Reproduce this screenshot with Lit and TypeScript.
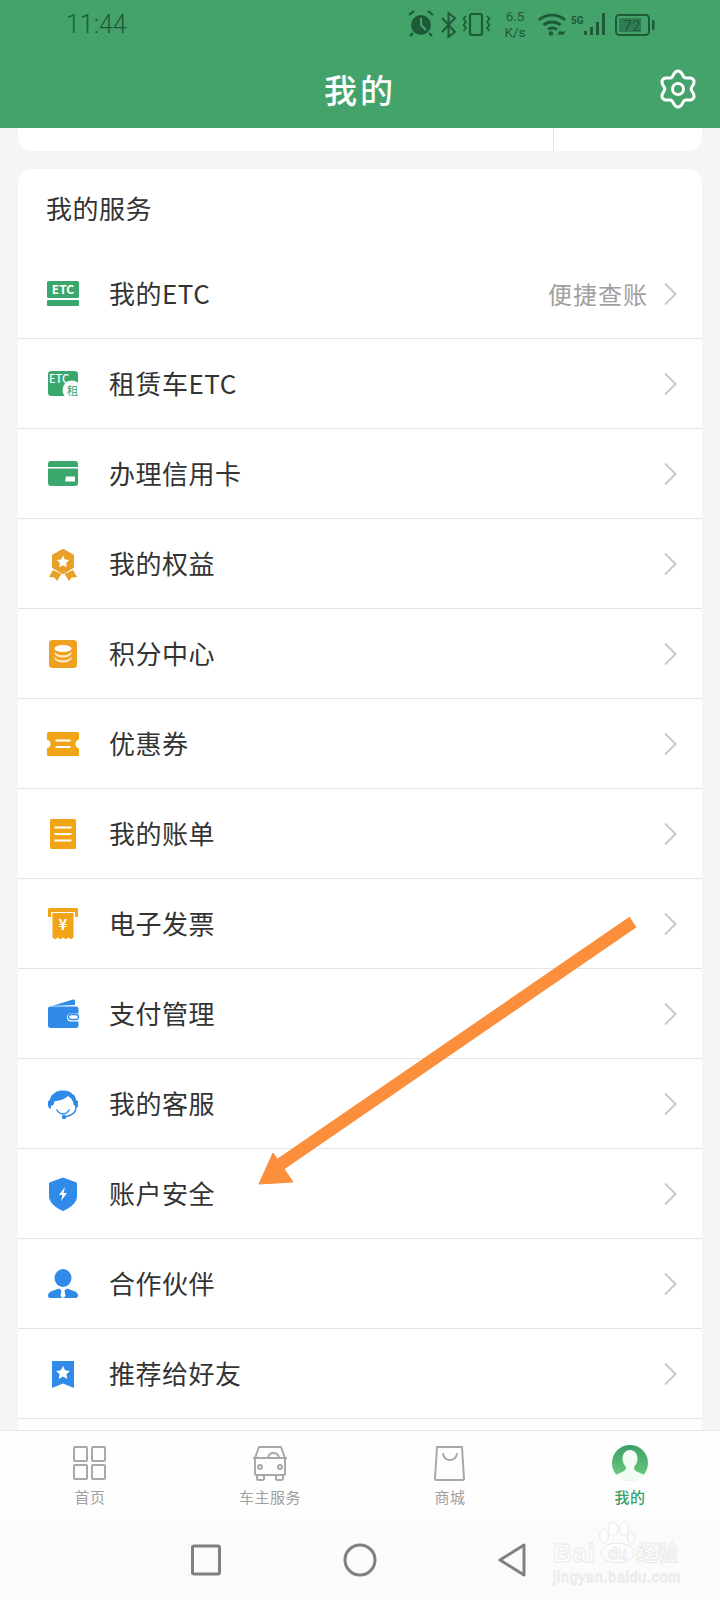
import { LitElement, html, css, svg } from 'lit';
import { customElement } from 'lit/decorators.js';

const GREEN = '#3aa76d';
const AMBER = '#f0a416';
const BLUE = '#2f8ae8';

// six soft lobes, same as the gear in the header
const gearPoints = () => {
  const pts: string[] = [];
  for (let i = 0; i < 120; i++) {
    const a = (i / 120) * Math.PI * 2;
    const r = 15.6 + 2.4 * Math.cos(6 * a);
    pts.push(`${(20 + r * Math.sin(a)).toFixed(2)},${(20 - r * Math.cos(a)).toFixed(2)}`);
  }
  return pts.join(' ');
};

const rowIcons = {
  etc: svg`<rect x="4" y="7" width="32" height="17" rx="1.5" fill="${GREEN}"/>
    <rect x="4" y="26" width="32" height="6" rx="1" fill="${GREEN}"/>
    <text x="20" y="20" text-anchor="middle" class="ico-txt" font-size="12" font-weight="700" fill="#fff">ETC</text>`,
  lease: svg`<rect x="5" y="7" width="30" height="25" rx="3.5" fill="${GREEN}"/>
    <text x="6" y="19" class="ico-txt" font-size="11" font-weight="500" fill="#fff">ETC</text>
    <circle cx="29" cy="26" r="9.5" fill="#fff"/>
    <text x="29.5" y="31" text-anchor="middle" class="ico-txt" font-size="11.5" fill="${GREEN}">租</text>`,
  card: svg`<path d="M8 7h24a3 3 0 0 1 3 3v3H5v-3a3 3 0 0 1 3-3zM5 14.500h30V29a3 3 0 0 1-3 3H8a3 3 0 0 1-3-3z" fill="${GREEN}"/>
    <path d="M23 22.500h9v5h-10z" fill="#fff"/>`,
  medal: svg`<path d="M10 26l-4 7 5.500.6 2.500 3.400 4.500-7zM30 26l4 7-5.500.6-2.500 3.400-4.500-7z" fill="#e8a027"/>
    <path d="M20 7l9 5v10.500l-9 5.500-9-5.500V12z" fill="#e8a027" stroke="#e8a027" stroke-width="4" stroke-linejoin="round"/>
    <path d="M20 11.500l1.900 3.900 4.300.6-3.100 3 .7 4.300-3.800-2-3.800 2 .7-4.300-3.100-3 4.300-.6z" fill="#fff"/>`,
  coins: svg`<rect x="6" y="6" width="28" height="28" rx="3.500" fill="#eda11f"/>
    <ellipse cx="20" cy="14.500" rx="8.500" ry="3.600" fill="#fff"/>
    <path d="M11.500 17.500c1 2.400 4.500 3.800 8.500 3.800s7.500-1.400 8.500-3.800v2.200c-1 2.400-4.500 3.800-8.500 3.800s-7.500-1.400-8.500-3.800zM11.500 22.500c1 2.400 4.500 3.800 8.500 3.800s7.500-1.400 8.500-3.800v2.200c-1 2.400-4.500 3.800-8.500 3.800s-7.500-1.400-8.500-3.800z" fill="#fde9c4"/>`,
  coupon: svg`<path d="M5 9a1.500 1.500 0 0 1 1.500-1.500h29A1.500 1.500 0 0 1 37 9v6c-2.400.8-3.600 2.500-3.600 4.500s1.200 3.700 3.600 4.500v6a1.500 1.500 0 0 1-1.500 1.500h-29A1.500 1.500 0 0 1 5 30v-6c2.400-.8 3.600-2.500 3.600-4.500S7.400 15.800 5 15z" transform="translate(-1 .500)" fill="${AMBER}"/>
    <path d="M12.500 16.500h15M12.500 23h15" stroke="#fff" stroke-width="2"/>`,
  bill: svg`<rect x="7" y="5" width="26" height="30" rx="1.500" fill="${AMBER}"/>
    <path d="M11.500 13.500h17M11.500 20h17M11.500 26.500h17" stroke="#fff" stroke-width="2"/>`,
  invoice: svg`<path d="M5 5.500a1.500 1.500 0 0 1 1.500-1.500h27A1.500 1.500 0 0 1 35 5.500V13h-3V8H8v5H5z" fill="${AMBER}"/>
    <path d="M9.500 9h21v24.500l-2.600 1.800-2.600-1.800-2.600 1.800-2.700-1.800-2.700 1.800-2.600-1.800-2.600 1.800-2.600-1.800z" fill="${AMBER}"/>
    <text x="20" y="25.500" text-anchor="middle" class="ico-txt" font-size="15" font-weight="700" fill="#fff">¥</text>`,
  wallet: svg`<path d="M9 12L30 5.500c1.300-.3 2 .3 2 1.500v4z" fill="${BLUE}"/>
    <path d="M7 12.500h26a2.500 2.500 0 0 1 2.500 2.500v4.500H28a4 4 0 0 0 0 8h7.500V32a2.500 2.500 0 0 1-2.500 2H7.500A2.500 2.500 0 0 1 5 32V15c0-1.500.800-2.500 2-2.500z" fill="${BLUE}"/>
    <rect x="25.500" y="20.500" width="10" height="5" rx="2.500" fill="none" stroke="${BLUE}" stroke-width="1.300"/>`,
  service: svg`<path d="M6.500 19C6.500 11 12.500 5 20 5s13.500 6 13.500 14c0 .9-.1 1.700-.3 2.500h-2.400c-.5-5-3-8-6-9.500-3 3.500-8.500 5-13 5l-1.600 4.500h-3.400c-.2-.8-.3-1.600-.3-2.500z" fill="${BLUE}"/>
    <path d="M9 10.500C12 6.800 16 5.800 20 5.800s8 1 11 4.700" fill="none" stroke="#fff" stroke-width="1.500"/>
    <path d="M5 17.500a3 3 0 0 1 3-1.500v9a4 4 0 0 1-3-3zM35 17.500a3 3 0 0 0-3-1.500v9a4 4 0 0 0 3-3z" fill="${BLUE}"/>
    <path d="M33 25c-1 4-4.500 6.500-10 7.500" fill="none" stroke="${BLUE}" stroke-width="1.500"/>
    <circle cx="21" cy="33" r="2.300" fill="${BLUE}"/>
    <path d="M13.500 25.500c1.500 2.700 3.700 4.300 6.500 4.300s5-1.600 6.500-4.300" fill="none" stroke="${BLUE}" stroke-width="1.500"/>`,
  shield: svg`<path d="M20 4l13.500 5v13c0 6.500-5.500 11-13.500 14.500C12 33 6.500 28.500 6.500 22V9z" fill="${BLUE}" stroke="${BLUE}" stroke-linejoin="round"/>
    <path d="M22 13l-6 8h3.500L18 27l6-8h-3.500z" fill="#fff"/>`,
  person: svg`<ellipse cx="20" cy="14" rx="8.500" ry="9" fill="${BLUE}"/>
    <path d="M5 31.500c0-2 1.500-3.500 4-4.500l7-2.500 2.500 2-1 5.500 2.500 2.500 2.500-2.500-1-5.500 2.500-2 7 2.500c2.500 1 4 2.500 4 4.500 0 1.500-.7 2.500-2 2.500H7c-1.300 0-2-1-2-2.500z" fill="${BLUE}"/>`,
  star: svg`<path d="M9 7h22v27l-11-4.500L9 34z" fill="${BLUE}"/>
    <path d="M20 12l2.100 4.300 4.800.6-3.500 3.300.9 4.800-4.300-2.400-4.300 2.400.9-4.800-3.500-3.300 4.800-.6z" fill="#fff"/>`,
};

type Row = { label: string; icon: keyof typeof rowIcons; hint?: string };

const rows: Row[] = [
  { label: '我的ETC', icon: 'etc', hint: '便捷查账' },
  { label: '租赁车ETC', icon: 'lease' },
  { label: '办理信用卡', icon: 'card' },
  { label: '我的权益', icon: 'medal' },
  { label: '积分中心', icon: 'coins' },
  { label: '优惠券', icon: 'coupon' },
  { label: '我的账单', icon: 'bill' },
  { label: '电子发票', icon: 'invoice' },
  { label: '支付管理', icon: 'wallet' },
  { label: '我的客服', icon: 'service' },
  { label: '账户安全', icon: 'shield' },
  { label: '合作伙伴', icon: 'person' },
  { label: '推荐给好友', icon: 'star' },
];

const tabs = [
  {
    label: '首页',
    icon: svg`<g fill="none" stroke="#a8a8a8" stroke-width="2"><rect x="2" y="2" width="13" height="14" rx="1"/><rect x="20" y="2" width="13" height="14" rx="1"/><rect x="2" y="20" width="13" height="14" rx="1"/><rect x="20" y="20" width="13" height="14" rx="1"/></g>`,
  },
  {
    label: '车主服务',
    icon: svg`<g fill="none" stroke="#a8a8a8" stroke-width="2" stroke-linejoin="round"><path d="M7 2h22l4 11H3z"/><path d="M3 13h30v15.500a1.500 1.500 0 0 1-1.500 1.500h-27A1.500 1.500 0 0 1 3 28.500z"/><path d="M16 13c.5-3 2.500-5 5.500-5s5 2 5.500 5"/><circle cx="8" cy="22" r="2"/><circle cx="28" cy="22" r="2"/><path d="M5 30v3.500A1.500 1.500 0 0 0 6.500 35h4a1.500 1.500 0 0 0 1.500-1.500V30M24 30v3.500a1.500 1.500 0 0 0 1.500 1.500h4a1.500 1.500 0 0 0 1.500-1.500V30"/><path d="M1 13h3M32 13h3"/></g>`,
  },
  {
    label: '商城',
    icon: svg`<g fill="none" stroke="#a8a8a8" stroke-width="2" stroke-linejoin="round"><path d="M5 2h25l2 31.500a1.500 1.500 0 0 1-1.500 1.500H4.500A1.500 1.500 0 0 1 3 33.500z"/><path d="M11 9c1 4 3.500 6 7 6s6-2 7-6" stroke-linecap="round"/></g>`,
  },
  {
    label: '我的',
    active: true,
    icon: svg`<defs><linearGradient id="av" x1="0" y1="0" x2="0" y2="1"><stop offset="0" stop-color="#3b9f68"/><stop offset="1" stop-color="#72d07f"/></linearGradient></defs>
      <ellipse cx="18" cy="18" rx="18" ry="18" fill="url(#av)"/>
      <path d="M18 5c4.500 0 7.500 3.800 7.500 8.500 0 3.500-1.500 6.500-3.500 8.500 0 3 1.500 4 6 6 2.500 1 4 2 5 3-3.500 3.500-9 5-15 5s-11-1.500-15-5c1-1 2.500-2 5-3 4.500-2 6-3 6-6-2-2-3.500-5-3.500-8.500C10.500 8.800 13.500 5 18 5z" fill="#f3fbf5"/>`,
  },
];

@customElement('app-root')
export class AppRoot extends LitElement {
  static styles = css`
    :host {
      display: block;
      font-family: 'Noto Sans CJK SC', 'Noto Sans', sans-serif;
      color: #333;
    }
    .page {
      position: relative;
      display: flex;
      flex-direction: column;
      height: 1600px;
      overflow: hidden;
      background: #f5f5f5;
    }
    .top {
      background: #43a36a;
      height: 128px;
      flex: none;
    }
    .status {
      height: 50px;
      display: flex;
      align-items: center;
      justify-content: space-between;
      padding-left: 66px;
      color: #1d5a38;
    }
    .time {
      font-family: Roboto, sans-serif;
      font-size: 25px;
      font-weight: 300;
      line-height: 52px;
    }
    .strip {
      display: block;
      width: 270px;
      height: 50px;
      margin-right: 50px;
    }
    .strip text {
      font-family: Roboto, sans-serif;
      fill: #1d5a38;
    }
    .title {
      height: 78px;
      display: flex;
      align-items: center;
      justify-content: center;
      position: relative;
      color: #fff;
      font-size: 33px;
      font-weight: 500;
      letter-spacing: 3px;
    }
    .gear {
      position: absolute;
      right: 22px;
      top: 19px;
      width: 40px;
      height: 40px;
    }
    .scroll {
      flex: 1;
      min-height: 0;
      overflow: hidden;
      padding: 0 18px;
    }
    .stub {
      height: 23px;
      background: #fff;
      border-radius: 0 0 14px 14px;
      margin-bottom: 18px;
      display: flex;
      justify-content: flex-end;
    }
    .stub i {
      display: block;
      width: 1px;
      background: #e2e2e2;
      margin-right: 148px;
    }
    .card {
      background: #fff;
      border-radius: 14px 14px 0 0;
    }
    .card h2 {
      margin: 0;
      height: 80px;
      padding: 0 0 0 28px;
      box-sizing: border-box;
      display: flex;
      align-items: center;
      font-size: 26px;
      font-weight: 400;
      letter-spacing: 0.5px;
      transform: translateY(-2px);
    }
    .row {
      height: 90px;
      box-sizing: border-box;
      border-bottom: 1px solid #e4e4e4;
      padding: 0 25px 0 25px;
      display: flex;
      align-items: center;
    }
    .row svg.ico {
      width: 40px;
      height: 40px;
      flex: none;
      margin-right: 26px;
    }
    .ico-txt {
      font-family: 'Noto Sans CJK SC', Roboto, sans-serif;
    }
    .label {
      flex: 1;
      font-size: 26px;
      letter-spacing: 0.5px;
      line-height: 1;
      padding-bottom: 2px;
    }
    .hint {
      font-size: 24px;
      letter-spacing: 1px;
      color: #a0a0a0;
      margin-right: 15px;
    }
    .chev {
      width: 14px;
      height: 24px;
      flex: none;
    }
    .tabs {
      flex: none;
      height: 90px;
      box-sizing: border-box;
      border-top: 1px solid #e6e6e6;
      background: #fefefe;
      display: grid;
      grid-template-columns: repeat(4, 1fr);
      padding-top: 14px;
    }
    .tab {
      display: flex;
      flex-direction: column;
      align-items: center;
      color: #a0a0a0;
      font-size: 15px;
    }
    .tab svg {
      width: 36px;
      height: 36px;
      display: block;
    }
    .tab span {
      margin-top: 5px;
      line-height: 22px;
      letter-spacing: 0.5px;
    }
    .tab.active {
      color: #3b9f68;
      font-weight: 500;
    }
    .nav {
      flex: none;
      height: 80px;
      background: #fbfbfb;
      display: flex;
      align-items: center;
      justify-content: center;
      gap: 114px;
    }
    .nav svg {
      width: 40px;
      height: 40px;
      display: block;
    }
    .arrow {
      position: absolute;
      left: 0;
      top: 0;
      width: 720px;
      height: 1600px;
      pointer-events: none;
    }
    .mark {
      position: absolute;
      left: 548px;
      top: 1518px;
      width: 140px;
      height: 72px;
      pointer-events: none;
    }
    .mark text {
      font-family: 'Liberation Sans', 'Noto Sans CJK SC', sans-serif;
      fill: #fdfdfd;
      stroke: #e8e8e8;
      stroke-width: 0.8;
    }
    .mark .paw {
      fill: #fdfdfd;
      stroke: #e8e8e8;
    }
  `;

  private statusStrip() {
    // strip starts at x=400 in the page
    return svg`<svg class="strip" viewBox="0 0 270 50">
      <g fill="#1d5a38">
        <circle cx="21" cy="25" r="10"/>
        <path d="M9 15l5-4M33 15l-5-4M13 33l-3 3M29 33l3 3" stroke="#1d5a38" stroke-width="2.200" fill="none"/>
        <path d="M21 18v7l5 5" stroke="#43a36a" stroke-width="2" fill="none"/>
      </g>
      <path d="M42 18l13 14-6.500 5V13l6.500 5-13 14" fill="none" stroke="#1d5a38" stroke-width="2"/>
      <rect x="70" y="14" width="12" height="21" rx="2" fill="none" stroke="#1d5a38" stroke-width="2.200"/>
      <path d="M66 16l-2.500 3 2.500 3-2.500 3 2.500 3-2.500 3M87 16l2.500 3-2.500 3 2.500 3-2.500 3 2.500 3" fill="none" stroke="#1d5a38" stroke-width="1.600"/>
      <text x="115" y="21" text-anchor="middle" font-size="13.500">6.5</text>
      <text x="115" y="37" text-anchor="middle" font-size="13.500">K/s</text>
      <path d="M139 20c7-6.500 19-6.500 26 0M143.500 25c4.500-4 12.500-4 17 0M148 29.500c2.500-2 6.500-2 9 0" fill="none" stroke="#1d5a38" stroke-width="2.800"/>
      <circle cx="151" cy="33.500" r="2.200" fill="#1d5a38"/>
      <path d="M158 31l-2.500 4h5zM161 36l2.500-4h-5z" fill="#1d5a38" transform="translate(2 -.500)"/>
      <text x="171" y="24" font-size="10" font-weight="700">5G</text>
      <g fill="#1d5a38">
        <rect x="184" y="31" width="3" height="4"/><rect x="190" y="27" width="3" height="8"/>
        <rect x="196" y="22" width="3" height="13"/><rect x="202" y="13" width="3" height="22"/>
      </g>
      <rect x="216" y="15" width="33" height="20" rx="3.500" fill="none" stroke="#1d5a38" stroke-width="2"/>
      <rect x="219" y="18" width="22" height="14" fill="#2f7d52"/>
      <rect x="252" y="20" width="2.500" height="10" rx="1" fill="#1d5a38"/>
      <text x="232" y="31" text-anchor="middle" font-size="15.500">72</text>
    </svg>`;
  }

  render() {
    return html`
      <div class="page">
        <header class="top">
          <div class="status">
            <span class="time">11:44</span>
            ${this.statusStrip()}
          </div>
          <div class="title">
            我的
            <svg class="gear" viewBox="0 0 40 40">
              <polygon points=${gearPoints()} fill="none" stroke="#fff" stroke-width="3"/>
              <circle cx="20" cy="20" r="5.500" fill="none" stroke="#fff" stroke-width="3"/>
            </svg>
          </div>
        </header>

        <main class="scroll">
          <div class="stub"><i></i></div>
          <section class="card">
            <h2>我的服务</h2>
            ${rows.map(
              (r) => html`
                <div class="row">
                  <svg class="ico" viewBox="0 0 40 40">${rowIcons[r.icon]}</svg>
                  <span class="label">${r.label}</span>
                  ${r.hint ? html`<span class="hint">${r.hint}</span>` : ''}
                  <svg class="chev" viewBox="0 0 14 24">
                    <path d="M2 1.500l10.500 10.500L2 22.500" fill="none" stroke="#c9c9c9" stroke-width="2"/>
                  </svg>
                </div>
              `
            )}
            <div class="row"></div>
          </section>
        </main>

        <nav class="tabs">
          ${tabs.map(
            (t) => html`
              <div class="tab ${t.active ? 'active' : ''}">
                <svg viewBox="0 0 36 36">${t.icon}</svg>
                <span>${t.label}</span>
              </div>
            `
          )}
        </nav>

        <div class="nav">
          <svg viewBox="0 0 40 40"><rect x="6.500" y="6" width="27" height="28" rx="1.500" fill="none" stroke="#808080" stroke-width="3"/></svg>
          <svg viewBox="0 0 40 40"><ellipse cx="20" cy="20" rx="15" ry="15" fill="none" stroke="#808080" stroke-width="3"/></svg>
          <svg viewBox="0 0 40 40"><path d="M30 5v30L6 20z" fill="none" stroke="#808080" stroke-width="3" stroke-linejoin="round"/></svg>
        </div>

        <svg class="arrow" viewBox="0 0 720 1600">
          <path d="M633 922L275 1168" stroke="#fb8f3c" stroke-width="12.500" fill="none"/>
          <path d="M259 1184L273 1153L293 1182z" fill="#fb8f3c" stroke="#fb8f3c" stroke-width="1"/>
        </svg>

        <svg class="mark" viewBox="0 0 140 72">
          <g class="paw">
            <ellipse cx="56" cy="18" rx="4.500" ry="7"/><ellipse cx="65" cy="11" rx="4.500" ry="7"/>
            <ellipse cx="76" cy="11" rx="4.500" ry="7"/><ellipse cx="83" cy="20" rx="3.500" ry="6"/>
          </g>
          <ellipse class="paw" cx="69.500" cy="35" rx="16.500" ry="10"/>
          <text x="5" y="44" font-size="26" font-weight="700" textLength="42">Bai</text>
          <text x="69.500" y="41" text-anchor="middle" font-size="16" font-weight="700">du</text>
          <text x="88" y="42" font-size="21" font-weight="700">经验</text>
          <text x="5" y="64" font-size="14" textLength="127">jingyan.baidu.com</text>
        </svg>
      </div>
    `;
  }
}
